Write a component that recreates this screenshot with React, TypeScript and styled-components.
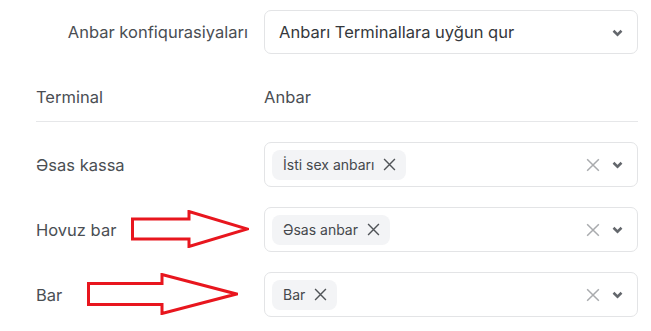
import styled, { createGlobalStyle } from 'styled-components'

const GlobalStyle = createGlobalStyle`
  html, body {
    margin: 0;
    padding: 0;
    background: #ffffff;
    font-family: Inter, Roboto, "Noto Sans", sans-serif;
  }
`

const rows = [
  { terminal: 'Əsas kassa', store: 'İsti sex anbarı' },
  { terminal: 'Hovuz bar', store: 'Əsas anbar' },
  { terminal: 'Bar', store: 'Bar' },
]

const Chevron = () => (
  <svg width="11" height="8" viewBox="0 0 11 8">
    <path d="M1.5 1.8 L5.5 5.6 L9.5 1.8" fill="none" stroke="#63676c" strokeWidth="2.6" />
  </svg>
)

const Cross = ({ color, size }: { color: string; size: number }) => (
  <svg width={size} height={size} viewBox="0 0 12 12">
    <path d="M1 1 L11 11 M11 1 L1 11" stroke={color} strokeWidth="1.3" />
  </svg>
)

const Arrow = ({ left, top, w, h, bar, base }: { left: number; top: number; w: number; h: number; bar: number; base: number }) => {
  const mid = h / 2
  const pts = [
    [1.5, mid - bar / 2],
    [base, mid - bar / 2],
    [base, 1.5],
    [w - 1.5, mid],
    [base, h - 1.5],
    [base, mid + bar / 2],
    [1.5, mid + bar / 2],
  ]
    .map((p) => p.join(','))
    .join(' ')
  return (
    <ArrowBox style={{ left, top }}>
      <svg width={w} height={h} viewBox={`0 0 ${w} ${h}`}>
        <polygon points={pts} fill="none" stroke="#e8161e" strokeWidth="3" strokeLinejoin="miter" />
      </svg>
    </ArrowBox>
  )
}

export default function App() {
  return (
    <>
      <GlobalStyle />
      <Page>
        <TopRow>
          <TopLabel>Anbar konfiqurasiyaları</TopLabel>
          <Select>
            <SelectText>Anbarı Terminallara uyğun qur</SelectText>
            <Icons>
              <Chevron />
            </Icons>
          </Select>
        </TopRow>
        <Header>
          <HeadCell>Terminal</HeadCell>
          <HeadCell>Anbar</HeadCell>
        </Header>
        <Rows>
          {rows.map((r) => (
            <Row key={r.terminal}>
              <RowLabel>{r.terminal}</RowLabel>
              <MultiSelect>
                <Chip>
                  {r.store}
                  <Cross color="#505458" size={13} />
                </Chip>
                <Icons>
                  <Cross color="#a9abae" size={14} />
                  <Chevron />
                </Icons>
              </MultiSelect>
            </Row>
          ))}
        </Rows>
        <Arrow left={131} top={210} w={118} h={38} bar={20} base={58} />
        <Arrow left={87} top={273} w={151} h={42} bar={21} base={75} />
      </Page>
    </>
  )
}

const Page = styled.div`
  position: relative;
  width: 651px;
  height: 331px;
  box-sizing: border-box;
  padding: 10px 13px 0 36px;
  color: #3c4043;
`

const TopRow = styled.div`
  display: grid;
  grid-template-columns: 212px 1fr;
  column-gap: 16px;
  align-items: center;
`

const TopLabel = styled.div`
  justify-self: end;
  font-size: 16.5px;
  color: #4a4e53;
`

const Select = styled.div`
  height: 44px;
  box-sizing: border-box;
  border: 1px solid #e3e4e6;
  border-radius: 7px;
  display: flex;
  align-items: center;
  padding: 0 14px 0 14px;
`

const SelectText = styled.div`
  flex: 1;
  font-size: 16.5px;
  color: #35383c;
`

const Icons = styled.div`
  display: flex;
  align-items: center;
  gap: 12px;
  padding-top: 1px;
`

const Header = styled.div`
  display: grid;
  grid-template-columns: 212px 1fr;
  column-gap: 16px;
  padding: 31px 0 12px;
  border-bottom: 1px solid #e6e7e9;
`

const HeadCell = styled.div`
  font-size: 16.5px;
  line-height: 24px;
  color: #4a4e53;
`

const Rows = styled.div`
  display: flex;
  flex-direction: column;
  gap: 20px;
  padding-top: 20px;
`

const Row = styled.div`
  display: grid;
  grid-template-columns: 212px 1fr;
  column-gap: 16px;
  align-items: center;
`

const RowLabel = styled.div`
  font-size: 16.5px;
  color: #4a4e53;
`

const MultiSelect = styled.div`
  height: 45px;
  box-sizing: border-box;
  border: 1px solid #e3e4e6;
  border-radius: 7px;
  display: flex;
  align-items: center;
  justify-content: space-between;
  padding: 0 14px 0 7px;
`

const Chip = styled.div`
  height: 30px;
  box-sizing: border-box;
  display: flex;
  align-items: center;
  gap: 9px;
  padding: 0 10px 0 11px;
  background: #f3f4f6;
  border-radius: 8px;
  font-size: 14px;
  color: #45484c;
`

const ArrowBox = styled.div`
  position: absolute;
  line-height: 0;
`
